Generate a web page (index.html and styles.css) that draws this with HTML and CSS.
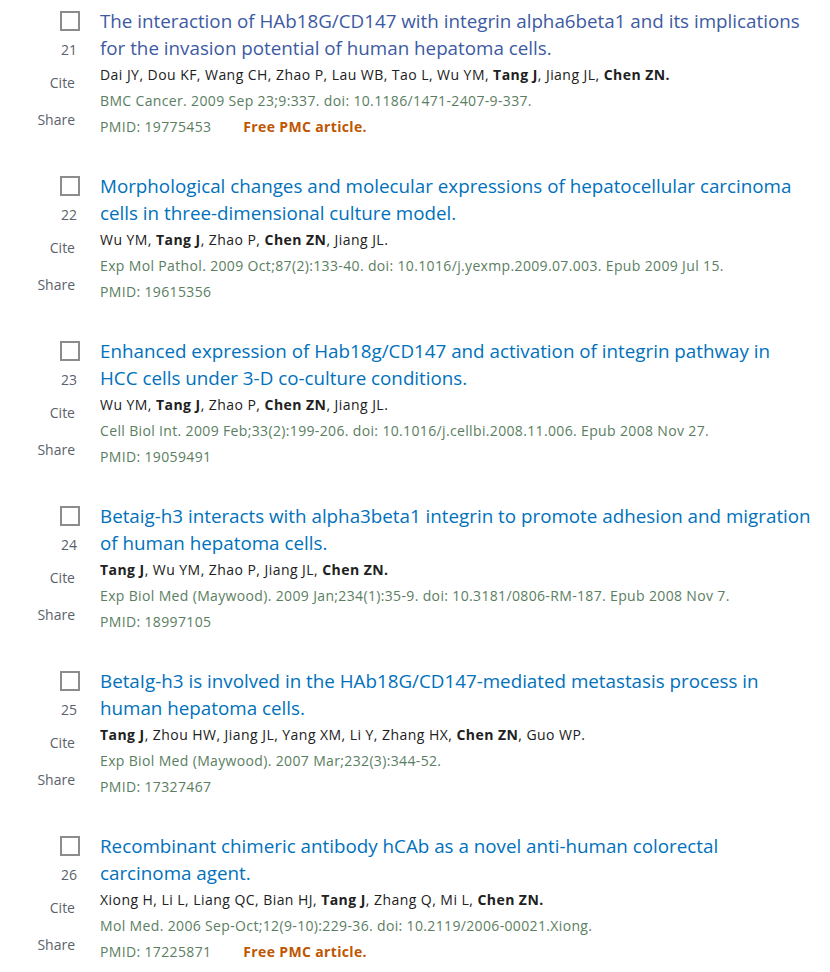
FILE: index.html
```html
<!DOCTYPE html>
<html>
<head>
<meta charset="utf-8">
<link rel="stylesheet" href="styles.css">
</head>
<body>
<div class="results">
  <article class="docsum">
    <div class="side">
      <span class="check"></span>
      <span class="num">21</span>
      <span class="action cite">Cite</span>
      <span class="action">Share</span>
    </div>
    <div class="content">
      <a class="title visited">The interaction of HAb18G/CD147 with integrin alpha6beta1 and its implications for the invasion potential of human hepatoma cells.</a>
      <div class="authors">Dai JY, Dou KF, Wang CH, Zhao P, Lau WB, Tao L, Wu YM, <b>Tang J</b>, Jiang JL, <b>Chen ZN.</b></div>
      <div class="citation">BMC Cancer. 2009 Sep 23;9:337. doi: 10.1186/1471-2407-9-337.</div>
      <div class="citation">PMID: 19775453 <span class="free">Free PMC article.</span></div>
    </div>
  </article>
  <article class="docsum">
    <div class="side">
      <span class="check"></span>
      <span class="num">22</span>
      <span class="action cite">Cite</span>
      <span class="action">Share</span>
    </div>
    <div class="content">
      <a class="title">Morphological changes and molecular expressions of hepatocellular carcinoma cells in three-dimensional culture model.</a>
      <div class="authors">Wu YM, <b>Tang J</b>, Zhao P, <b>Chen ZN</b>, Jiang JL.</div>
      <div class="citation">Exp Mol Pathol. 2009 Oct;87(2):133-40. doi: 10.1016/j.yexmp.2009.07.003. Epub 2009 Jul 15.</div>
      <div class="citation">PMID: 19615356</div>
    </div>
  </article>
  <article class="docsum">
    <div class="side">
      <span class="check"></span>
      <span class="num">23</span>
      <span class="action cite">Cite</span>
      <span class="action">Share</span>
    </div>
    <div class="content">
      <a class="title">Enhanced expression of Hab18g/CD147 and activation of integrin pathway in HCC cells under 3-D co-culture conditions.</a>
      <div class="authors">Wu YM, <b>Tang J</b>, Zhao P, <b>Chen ZN</b>, Jiang JL.</div>
      <div class="citation">Cell Biol Int. 2009 Feb;33(2):199-206. doi: 10.1016/j.cellbi.2008.11.006. Epub 2008 Nov 27.</div>
      <div class="citation">PMID: 19059491</div>
    </div>
  </article>
  <article class="docsum">
    <div class="side">
      <span class="check"></span>
      <span class="num">24</span>
      <span class="action cite">Cite</span>
      <span class="action">Share</span>
    </div>
    <div class="content">
      <a class="title">Betaig-h3 interacts with alpha3beta1 integrin to promote adhesion and migration of human hepatoma cells.</a>
      <div class="authors"><b>Tang J</b>, Wu YM, Zhao P, Jiang JL, <b>Chen ZN.</b></div>
      <div class="citation">Exp Biol Med (Maywood). 2009 Jan;234(1):35-9. doi: 10.3181/0806-RM-187. Epub 2008 Nov 7.</div>
      <div class="citation">PMID: 18997105</div>
    </div>
  </article>
  <article class="docsum">
    <div class="side">
      <span class="check"></span>
      <span class="num">25</span>
      <span class="action cite">Cite</span>
      <span class="action">Share</span>
    </div>
    <div class="content">
      <a class="title">BetaIg-h3 is involved in the HAb18G/CD147-mediated metastasis process in human hepatoma cells.</a>
      <div class="authors"><b>Tang J</b>, Zhou HW, Jiang JL, Yang XM, Li Y, Zhang HX, <b>Chen ZN</b>, Guo WP.</div>
      <div class="citation">Exp Biol Med (Maywood). 2007 Mar;232(3):344-52.</div>
      <div class="citation">PMID: 17327467</div>
    </div>
  </article>
  <article class="docsum">
    <div class="side">
      <span class="check"></span>
      <span class="num">26</span>
      <span class="action cite">Cite</span>
      <span class="action">Share</span>
    </div>
    <div class="content">
      <a class="title">Recombinant chimeric antibody hCAb as a novel anti-human colorectal carcinoma agent.</a>
      <div class="authors">Xiong H, Li L, Liang QC, Bian HJ, <b>Tang J</b>, Zhang Q, Mi L, <b>Chen ZN.</b></div>
      <div class="citation">Mol Med. 2006 Sep-Oct;12(9-10):229-36. doi: 10.2119/2006-00021.Xiong.</div>
      <div class="citation">PMID: 17225871 <span class="free">Free PMC article.</span></div>
    </div>
  </article>
</div>
</body>
</html>
```
FILE: styles.css
```css
html, body {
  margin: 0;
  padding: 0;
  background: #ffffff;
}
body {
  font-family: "Open Sans", "Noto Sans", sans-serif;
  color: #212121;
}
.results {
  display: flex;
  flex-direction: column;
}
.docsum {
  display: grid;
  grid-template-columns: 80px 711px;
  column-gap: 20px;
  height: 165px;
  padding-top: 8px;
  box-sizing: border-box;
}
.side {
  display: flex;
  flex-direction: column;
  align-items: flex-end;
  color: #5b616b;
  font-size: 14px;
}
.check {
  width: 16px;
  height: 16px;
  border: 2px solid #8c8c8c;
  margin-top: 3px;
  margin-right: 0;
}
.num {
  margin-top: 6px;
  line-height: 26px;
  margin-right: 3px;
}
.action {
  line-height: 26px;
  margin-right: 5px;
}
.cite {
  margin-top: 7px;
  margin-bottom: 11px;
}
.content {
  display: flex;
  flex-direction: column;
}
.title {
  font-size: 18.8px;
  line-height: 27px;
  color: #0071bc;
  text-decoration: none;
}
.title.visited {
  color: #3d5aa3;
}
.authors {
  font-size: 14px;
  letter-spacing: 0.45px;
  line-height: 26px;
  color: #212121;
}
.authors b {
  font-weight: 700;
}
.citation {
  font-size: 14px;
  letter-spacing: 0.35px;
  line-height: 26px;
  color: #5a7e5f;
}
.free {
  color: #c05600;
  font-weight: 700;
  margin-left: 28px;
}
```
